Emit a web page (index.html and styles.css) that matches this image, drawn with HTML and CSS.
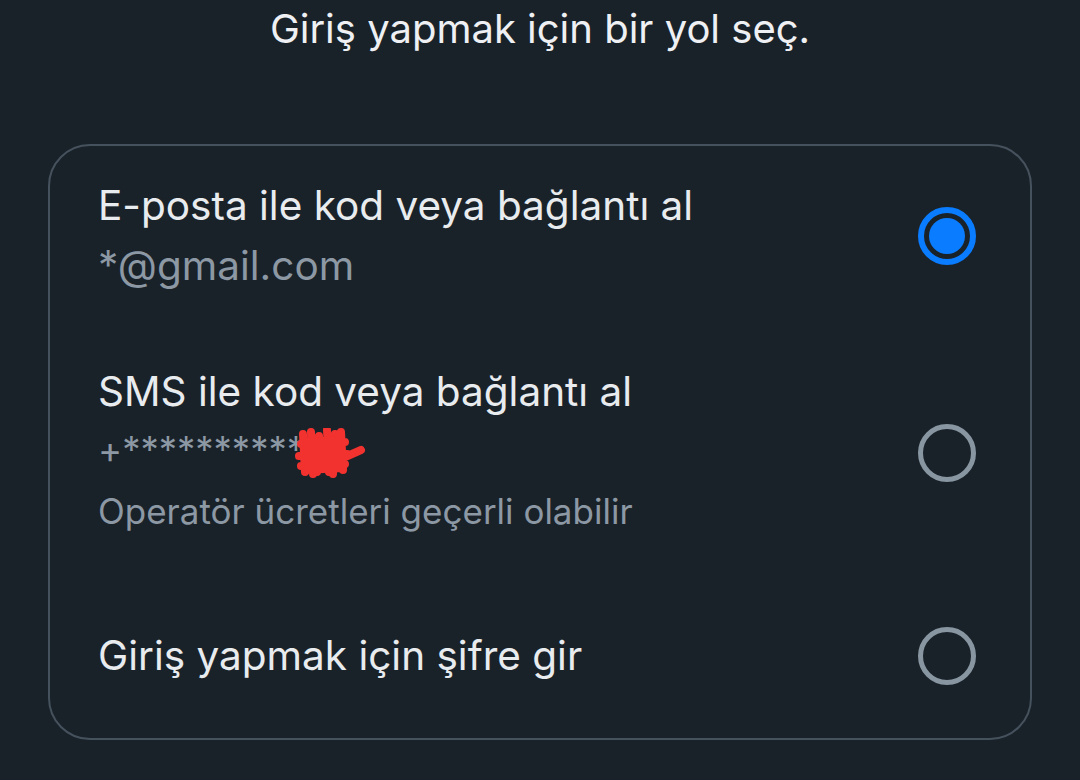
FILE: index.html
```html
<!DOCTYPE html>
<html lang="tr">
<head>
<meta charset="utf-8">
<link rel="stylesheet" href="styles.css">
</head>
<body>
<h1 class="title">Giriş yapmak için bir yol seç.</h1>
<div class="card">
  <div class="row row-email">
    <div class="text">
      <div class="main">E-posta ile kod veya bağlantı al</div>
      <div class="sub">*@gmail.com</div>
    </div>
    <div class="radio checked"><span class="dot"></span></div>
  </div>
  <div class="row row-sms">
    <div class="text">
      <div class="main">SMS ile kod veya bağlantı al</div>
      <div class="phone">+**********<span class="redact"><svg width="72" height="50" viewBox="0 0 72 50"><path d="M8 6 L10 44 M16 4 L18 46 M24 8 L22 44 M32 2 L34 44 M40 6 L38 46 M46 4 L48 42 M6 16 L50 14 M4 28 L52 26 M6 38 L50 36 M48 30 L66 22" fill="none" stroke="#f2322f" stroke-width="8" stroke-linecap="round"/><path d="M8 10 L46 8 L48 44 L10 46 Z" fill="#f2322f"/></svg></span></div>
      <div class="note">Operatör ücretleri geçerli olabilir</div>
    </div>
    <div class="radio"></div>
  </div>
  <div class="row row-pass">
    <div class="text">
      <div class="main">Giriş yapmak için şifre gir</div>
    </div>
    <div class="radio"></div>
  </div>
</div>
</body>
</html>
```

FILE: styles.css
```css
html, body {
  margin: 0;
  padding: 0;
  background: #1a2229;
  width: 1080px;
  height: 780px;
  overflow: hidden;
  font-family: Inter, "Noto Sans", sans-serif;
}
.title {
  margin: 0;
  padding-top: 5px;
  text-align: center;
  font-size: 40px;
  font-weight: 400;
  line-height: 48px;
  color: #eef0f3;
}
.card {
  margin: 91px 48px 0 48px;
  border: 2px solid #45525e;
  border-radius: 42px;
  padding: 30px 54px 52px 48px;
  display: flex;
  flex-direction: column;
  gap: 66px;
}
.row {
  display: flex;
  align-items: center;
  justify-content: space-between;
}
.row-pass {
  margin-top: 16px;
}
.text {
  display: flex;
  flex-direction: column;
}
.main {
  font-size: 40.5px;
  line-height: 60px;
  color: #e9ecef;
}
.sub {
  font-size: 40.5px;
  line-height: 60px;
  color: #8c98a4;
}
.phone {
  font-size: 36.5px;
  line-height: 46px;
  color: #8c98a4;
  display: flex;
  align-items: center;
}
.redact {
  display: inline-block;
  width: 72px;
  height: 50px;
  margin-left: -10px;
  margin-top: 6px;
}
.note {
  font-size: 35px;
  line-height: 66px;
  color: #8c98a4;
}
.radio {
  width: 58px;
  height: 58px;
  box-sizing: border-box;
  border: 5px solid #8896a2;
  border-radius: 50%;
  display: flex;
  align-items: center;
  justify-content: center;
  flex: none;
}
.radio.checked {
  border: 6px solid #0a7cff;
}
.dot {
  width: 36px;
  height: 36px;
  border-radius: 50%;
  background: #0a7cff;
}
```
